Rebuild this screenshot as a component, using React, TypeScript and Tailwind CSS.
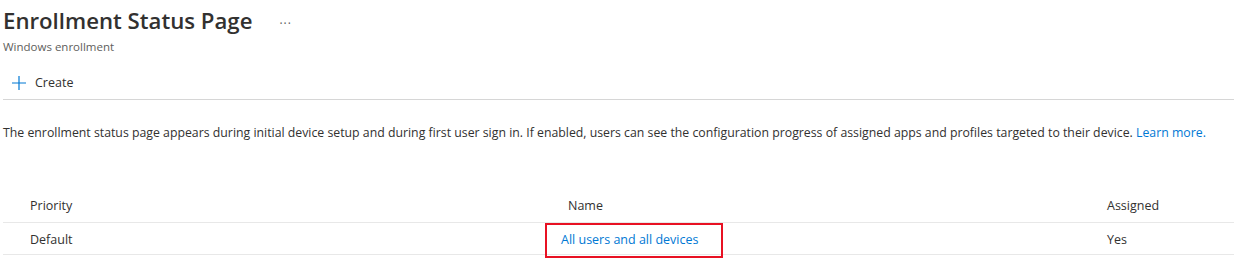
import React from 'react';

const font = { fontFamily: '"Segoe UI", "Open Sans", "Noto Sans", sans-serif' };

const PlusIcon = () => (
  <svg width="16" height="16" viewBox="0 0 16 16" className="text-[#0078d4]">
    <path d="M8 1v14M1 8h14" stroke="currentColor" strokeWidth="1.2" fill="none" />
  </svg>
);

export default function App() {
  return (
    <div className="w-[1235px] h-[270px] bg-white text-[#323130] overflow-hidden" style={font}>
      {/* Title block */}
      <div className="pl-[3px] pt-[5px]">
        <div className="flex items-center h-[33px]">
          <h1 className="text-[22.2px] font-semibold leading-none">Enrollment Status Page</h1>
          <span className="ml-[27px] mt-[4px] text-[12px] text-[#605e5c] tracking-[1px]">···</span>
        </div>
        <div className="text-[11.5px] leading-[15px] text-[#605e5c] mt-[1px]">Windows enrollment</div>
      </div>

      {/* Command bar */}
      <div className="ml-[3px] mr-[1px] mt-[12px] h-[34px] flex items-center border-b border-[#d6d6d6]">
        <button className="flex items-center gap-[8px] pl-[8px] text-[12.5px] text-[#323130] mt-[1px]">
          <PlusIcon />
          <span>Create</span>
        </button>
      </div>

      {/* Description */}
      <p className="pl-[3px] mt-[24px] text-[12.3px] leading-[18px]">
        The enrollment status page appears during initial device setup and during first user sign in. If enabled, users can see the configuration progress of assigned apps and profiles targeted to their device.{' '}
        <a className="text-[#0078d4]">Learn more.</a>
      </p>

      {/* Table */}
      <div className="ml-[3px] mr-[1px] mt-[49px] text-[12.5px]">
        <div className="grid grid-cols-[542px_546px_1fr] h-[32px] items-center border-b border-[#e8e8e8]">
          <div className="pl-[27px]">Priority</div>
          <div className="pl-[23px]">Name</div>
          <div className="pl-[16px]">Assigned</div>
        </div>
        <div className="grid grid-cols-[542px_546px_1fr] h-[32px] items-center border-b border-[#e8e8e8]">
          <div className="pl-[27px] pt-[3px]">Default</div>
          <div className="relative h-full flex items-center pl-[16px] pt-[3px]">
            <a className="text-[#0078d4]">All users and all devices</a>
            <div className="absolute left-0 top-0 w-[178px] h-[35px] border-2 border-[#e81123]" />
          </div>
          <div className="pl-[16px] pt-[3px]">Yes</div>
        </div>
      </div>
    </div>
  );
}
